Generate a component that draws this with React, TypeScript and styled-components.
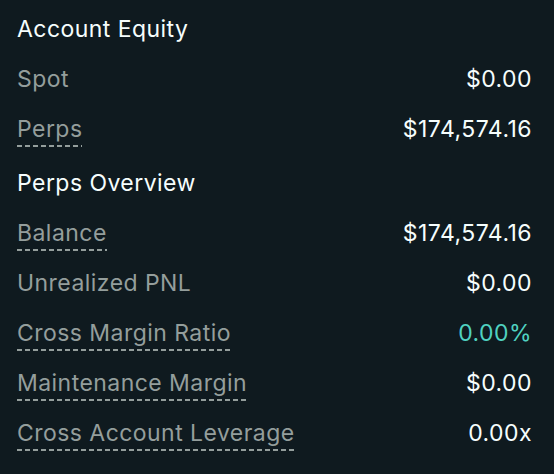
import React from "react";
import styled, { createGlobalStyle } from "styled-components";

const Global = createGlobalStyle`
  html, body { margin: 0; padding: 0; background: #0f1a1f; }
  body { font-family: Inter, "Noto Sans", sans-serif; -webkit-font-smoothing: antialiased; }
`;

const Panel = styled.div`
  width: 554px;
  height: 474px;
  box-sizing: border-box;
  background: #0f1a1f;
  padding: 4px 22px 0 17px;
  display: flex;
  flex-direction: column;
`;

const Section = styled.div<{ $gap?: number }>`
  display: flex;
  flex-direction: column;
  margin-top: ${(p) => p.$gap ?? 0}px;
`;

const Row = styled.div`
  height: 50px;
  display: flex;
  align-items: center;
  justify-content: space-between;
  font-size: 23px;
  line-height: 26px;
  letter-spacing: 0.45px;
`;

const Heading = styled.div`
  color: #f6fefd;
`;

const Label = styled.span<{ $tip?: boolean }>`
  color: #949e9c;
  padding-bottom: ${(p) => (p.$tip ? "5px" : "0")};
  margin-bottom: ${(p) => (p.$tip ? "-5px" : "0")};
  background-image: ${(p) =>
    p.$tip
      ? "repeating-linear-gradient(to right, #949e9c 0 5px, transparent 5px 8px)"
      : "none"};
  background-size: 100% 2px;
  background-repeat: no-repeat;
  background-position: 0 100%;
`;

const Value = styled.span<{ $accent?: boolean }>`
  color: ${(p) => (p.$accent ? "#50d2c1" : "#f6fefd")};
`;

type Item = { label: string; value: string; tip?: boolean; accent?: boolean };

const equity: Item[] = [
  { label: "Spot", value: "$0.00" },
  { label: "Perps", value: "$174,574.16", tip: true },
];

const overview: Item[] = [
  { label: "Balance", value: "$174,574.16", tip: true },
  { label: "Unrealized PNL", value: "$0.00" },
  { label: "Cross Margin Ratio", value: "0.00%", tip: true, accent: true },
  { label: "Maintenance Margin", value: "$0.00", tip: true },
  { label: "Cross Account Leverage", value: "0.00x", tip: true },
];

const renderRows = (items: Item[]) =>
  items.map((it) => (
    <Row key={it.label}>
      <Label $tip={it.tip}>{it.label}</Label>
      <Value $accent={it.accent}>{it.value}</Value>
    </Row>
  ));

export default function App() {
  return (
    <>
      <Global />
      <Panel>
        <Section>
          <Row>
            <Heading>Account Equity</Heading>
          </Row>
          {renderRows(equity)}
        </Section>
        <Section $gap={4}>
          <Row>
            <Heading>Perps Overview</Heading>
          </Row>
          {renderRows(overview)}
        </Section>
      </Panel>
    </>
  );
}
